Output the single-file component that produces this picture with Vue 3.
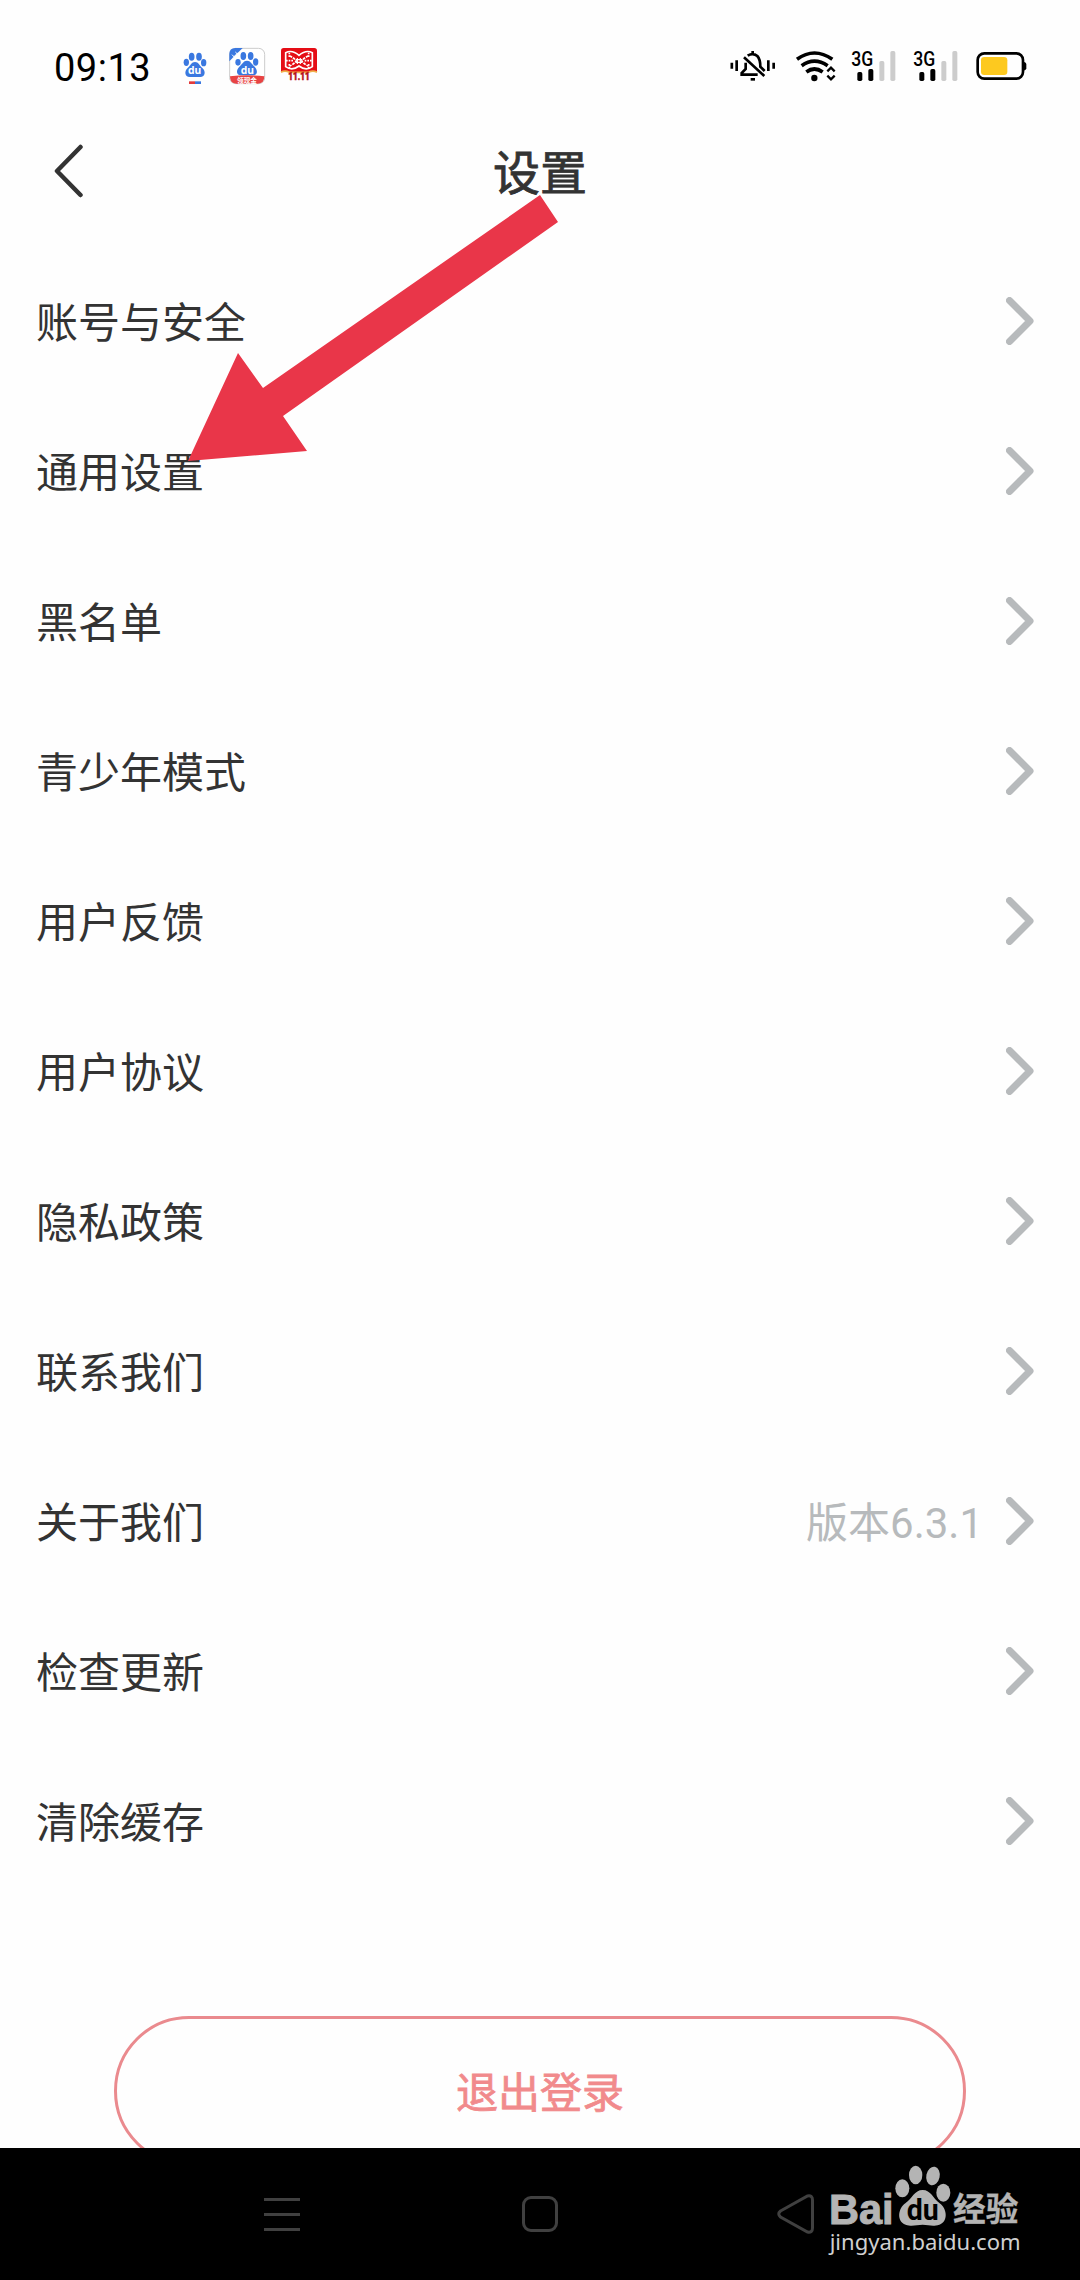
<template>
  <div class="screen">
    <div class="content">
      <div class="status-bar">
        <span class="time">09:13</span>
        <!-- notification icons -->
        <svg class="notify" viewBox="450 0 420 210" width="140" height="70">
          <g fill="#3a78e0">
            <ellipse cx="469" cy="97" rx="8" ry="11" />
            <ellipse cx="485" cy="80" rx="8.5" ry="12" />
            <ellipse cx="507" cy="80" rx="8.5" ry="12" />
            <ellipse cx="521" cy="98" rx="8" ry="11" />
            <path :d="smallPaw" />
            <rect x="495" y="154" width="18" height="8" />
          </g>
          <rect x="477" y="154" width="18" height="8" fill="#e23b3b" />
          <text x="494" y="133" class="du" font-size="31" fill="#fff">du</text>

          <rect x="599" y="55" width="105" height="106" rx="18" fill="#fff" stroke="#ccc" stroke-width="3" />
          <path d="M598 94V72Q598 54 616 54H638Z" fill="#3a78e0" />
          <path d="M610 82l14-14M606 74l8 8M616 66l8 8" stroke="#fff" stroke-width="3" />
          <g fill="#3a78e0">
            <ellipse cx="624" cy="97" rx="8" ry="10" />
            <ellipse cx="640" cy="78" rx="8.5" ry="12" />
            <ellipse cx="662" cy="78" rx="8.5" ry="12" />
            <ellipse cx="677" cy="96" rx="8" ry="11" />
            <path d="M651 92C662 92 665 103 674 110C683 120 684 135 670 136H632C618 135 618 120 628 110C637 103 640 92 651 92Z" />
          </g>
          <text x="652" y="131" class="du" font-size="31" fill="#fff">du</text>
          <path d="M600 139Q651 133 703 139Q703 161 684 161H618Q600 161 600 139Z" fill="#e84343" />
          <text x="651" y="158" class="du" font-size="20" fill="#fff">领现金</text>

          <path d="M753 126V62Q753 54 761 54H853Q861 54 861 62V126Z" fill="#e50d16" />
          <!-- paper-cut double knot -->
          <g fill="none" stroke="#fff">
            <path d="M807 76Q786 58 767 68V110Q786 124 807 108Q828 124 847 110V68Q828 58 807 76Z" stroke-width="5" />
            <path d="M779 78q12 5 20 15q-8 10-20 15M835 78q-12 5-20 15q8 10 20 15" stroke-width="5" stroke-dasharray="8 3" />
            <path d="M768 92H790M824 92H846M778 68v14M778 102v14M836 68v14M836 102v14" stroke-width="5" stroke-dasharray="5 3" />
            <path d="M802 84V102M811 84V102M797 89H817M797 97H817" stroke-width="3.5" />
          </g>
          <path d="M753 127Q765 120 778 127H836Q849 120 861 127" fill="none" stroke="#f0b04c" stroke-width="5" />
          <text x="775" y="151" class="sale" textLength="64" lengthAdjust="spacingAndGlyphs">11.11</text>
        </svg>

        <!-- system icons -->
        <svg class="system" viewBox="50 0 910 210" width="303.33" height="70">
          <g fill="none" stroke="#000" stroke-width="8">
            <path d="M64.5 98v18M79 91v32M174 91v32M190 98v18" />
            <path d="M106 98V117L94 129V134H142M112 77Q128 67 141 78Q150 88 150 110L163 123M127 63V72M101 82L162 138" />
            <path d="M121 148H134" />
          </g>
          <g fill="none" stroke="#000" stroke-width="11">
            <path d="M260 88Q312 50 366 88M274 107Q312 80 352 107M288 126Q312 108 337 126" />
            <path d="M351 124L362 113L373 124M351 137L362 148L373 137" stroke-width="7" />
          </g>
          <circle cx="312" cy="144" r="9.5" />
          <g v-for="x in [0, 186]" :key="x" :transform="`translate(${x} 0)`">
            <text x="423" y="107" class="net" textLength="66" lengthAdjust="spacingAndGlyphs">3G</text>
            <rect x="441" y="126" width="15" height="27" rx="5" />
            <rect x="474" y="117" width="15" height="36" rx="5" />
            <rect x="507" y="93" width="15" height="60" rx="5" fill="#ccc" />
            <rect x="540" y="63" width="15" height="90" rx="5" fill="#ccc" />
          </g>
          <rect x="802" y="70" width="136" height="76" rx="20" fill="none" stroke="#000" stroke-width="8" />
          <rect x="812" y="81" width="79" height="54" rx="10" fill="#fdc91f" />
          <path d="M940 95Q948 97 948 102V115Q948 120 940 122Z" />
        </svg>
      </div>

      <header class="header">
        <svg class="back" viewBox="0 0 30 54" width="30" height="54">
          <path d="M26.500 3L3 27L26.500 51" />
        </svg>
        <h1 class="title">设置</h1>
      </header>

      <ul class="list">
        <li v-for="item in items" :key="item.label" class="item">
          <span class="label">{{ item.label }}</span>
          <span v-if="item.extra" class="extra">{{ item.extra }}</span>
          <svg class="arrow" viewBox="0 0 28 48" width="28" height="48">
            <path d="M3.5 3.5L24 24L3.5 44.5" />
          </svg>
        </li>
      </ul>

      <button class="logout">退出登录</button>
    </div>

    <nav class="nav">
      <svg viewBox="0 0 36 36" width="36" height="36">
        <path d="M0 3.5H36M0 18.5H36M0 33.5H36" />
      </svg>
      <svg class="home" viewBox="0 0 36 36" width="36" height="36">
        <rect x="1.5" y="1.5" width="33" height="33" rx="7.5" />
      </svg>
      <svg viewBox="0 0 38 40" width="38" height="40">
        <path d="M3.5 17L30.5 2Q35.5 1 35.5 6V34Q35.5 39 30.5 38L3.5 23Q0 20 3.5 17Z" />
      </svg>
    </nav>

    <!-- red arrow drawn over the list -->
    <svg class="pointer" viewBox="0 0 371 267" width="371" height="267">
      <path d="M352 0L370 27L95 221L119 256L0 266L50 158L75 193Z" />
    </svg>

    <svg class="watermark" viewBox="260 60 590 300" width="196.67" height="100">
      <g fill="#b4b4b4">
        <text x="266" y="251" class="brand" textLength="194" lengthAdjust="spacingAndGlyphs">Bai</text>
        <ellipse cx="486" cy="145" rx="21" ry="27" />
        <ellipse cx="526" cy="105" rx="20" ry="28" />
        <ellipse cx="578" cy="108" rx="20" ry="28" transform="rotate(12 578 108)" />
        <ellipse cx="609" cy="158" rx="21" ry="27" />
        <path d="M547 150C572 150 578 175 598 190C620 205 625 245 597 254C575 261 566 254 547 254C528 254 516 261 496 254C468 245 473 205 495 190C516 175 522 150 547 150Z" />
        <text x="638" y="243" class="brand cn" textLength="196" lengthAdjust="spacingAndGlyphs">经验</text>
      </g>
      <text x="547" y="241" class="du logo-du" textLength="96" lengthAdjust="spacingAndGlyphs">du</text>
      <text x="268" y="331" class="site" textLength="573" lengthAdjust="spacingAndGlyphs">jingyan.baidu.com</text>
    </svg>
  </div>
</template>

<script setup>
const smallPaw = 'M495 96C506 96 508 107 517 114C528 124 526 140 511 141H479C464 140 462 124 473 114C482 107 484 96 495 96Z'

const items = [
  { label: '账号与安全' },
  { label: '通用设置' },
  { label: '黑名单' },
  { label: '青少年模式' },
  { label: '用户反馈' },
  { label: '用户协议' },
  { label: '隐私政策' },
  { label: '联系我们' },
  { label: '关于我们', extra: '版本6.3.1' },
  { label: '检查更新' },
  { label: '清除缓存' }
]
</script>

<style>
body {
  margin: 0;
  background: #fefefe;
}
</style>

<style scoped>
.screen {
  position: relative;
  display: flex;
  flex-direction: column;
  width: 1080px;
  height: 2280px;
  overflow: hidden;
  background: #fefefe;
  color: #333;
  font-family: Roboto, "Noto Sans CJK SC", sans-serif;
}

.content {
  height: 2148px;
  overflow: hidden;
}

.status-bar {
  display: flex;
  box-sizing: border-box;
  height: 100px;
  padding: 30px 50px 0 54px;
}

.time {
  width: 126px;
  color: #000;
  font-size: 38px;
  letter-spacing: 0.5px;
  line-height: 77px;
  white-space: nowrap;
}

.system {
  margin-left: auto;
}

.du {
  font-family: "Noto Sans", "Noto Sans CJK SC", sans-serif;
  font-weight: 700;
  text-anchor: middle;
}

.logo-du {
  font-family: Roboto, sans-serif;
  font-size: 86px;
}

.sale {
  fill: #b5101c;
  stroke: #b5101c;
  stroke-width: 1.5px;
  font-family: Roboto, sans-serif;
  font-size: 30px;
  font-weight: 900;
}

.net {
  font-family: Roboto, sans-serif;
  font-size: 59px;
  font-weight: 500;
}

.header {
  display: grid;
  grid-template-columns: 30px 1fr 30px;
  align-items: center;
  height: 142px;
  margin-bottom: 4px;
  padding: 0 54px;
}

.back {
  fill: none;
  stroke: #333;
  stroke-width: 4.5;
  stroke-linecap: round;
  stroke-linejoin: round;
}

.title {
  margin: 0;
  padding-top: 6px;
  font-size: 47px;
  font-weight: 400;
  line-height: 72px;
  text-align: center;
  -webkit-text-stroke: 0.8px #333;
}

.list {
  margin: 0;
  padding: 0;
  list-style: none;
}

.item {
  display: flex;
  align-items: center;
  height: 150px;
  padding: 0 46px 0 36px;
  font-size: 42px;
}

.label {
  flex: 1;
  padding-bottom: 4px;
}

.extra {
  margin-right: 23px;
  padding-bottom: 4px;
  color: #b7babc;
}

.arrow {
  fill: none;
  stroke: #b7babc;
  stroke-width: 7;
  stroke-linecap: round;
  stroke-linejoin: round;
}

.logout {
  display: block;
  width: 852px;
  height: 150px;
  margin: 120px auto 0;
  padding: 0 0 4px;
  border: 3px solid #ea8a8e;
  border-radius: 75px;
  background: transparent;
  color: #f18a8c;
  font-family: inherit;
  font-size: 42px;
  -webkit-text-stroke: 0.8px #f18a8c;
}

.nav {
  display: flex;
  align-items: center;
  gap: 219px;
  box-sizing: border-box;
  height: 132px;
  padding-left: 264px;
  background: #000;
  fill: none;
  stroke: #404040;
  stroke-width: 3;
}

.home {
  margin-left: 3px;
}

.pointer {
  position: absolute;
  top: 195px;
  left: 188px;
  fill: #e93649;
}

.watermark {
  position: absolute;
  top: 2160px;
  left: 826.67px;
}

.brand {
  stroke: #b4b4b4;
  stroke-width: 3px;
  font-family: "Liberation Sans", sans-serif;
  font-size: 128px;
  font-weight: 700;
}

.cn {
  stroke-width: 1px;
  font-family: "Noto Sans CJK SC", sans-serif;
  font-size: 98px;
}

.site {
  fill: #d0d0d0;
  font-family: "Noto Sans", sans-serif;
  font-size: 67px;
}
</style>
